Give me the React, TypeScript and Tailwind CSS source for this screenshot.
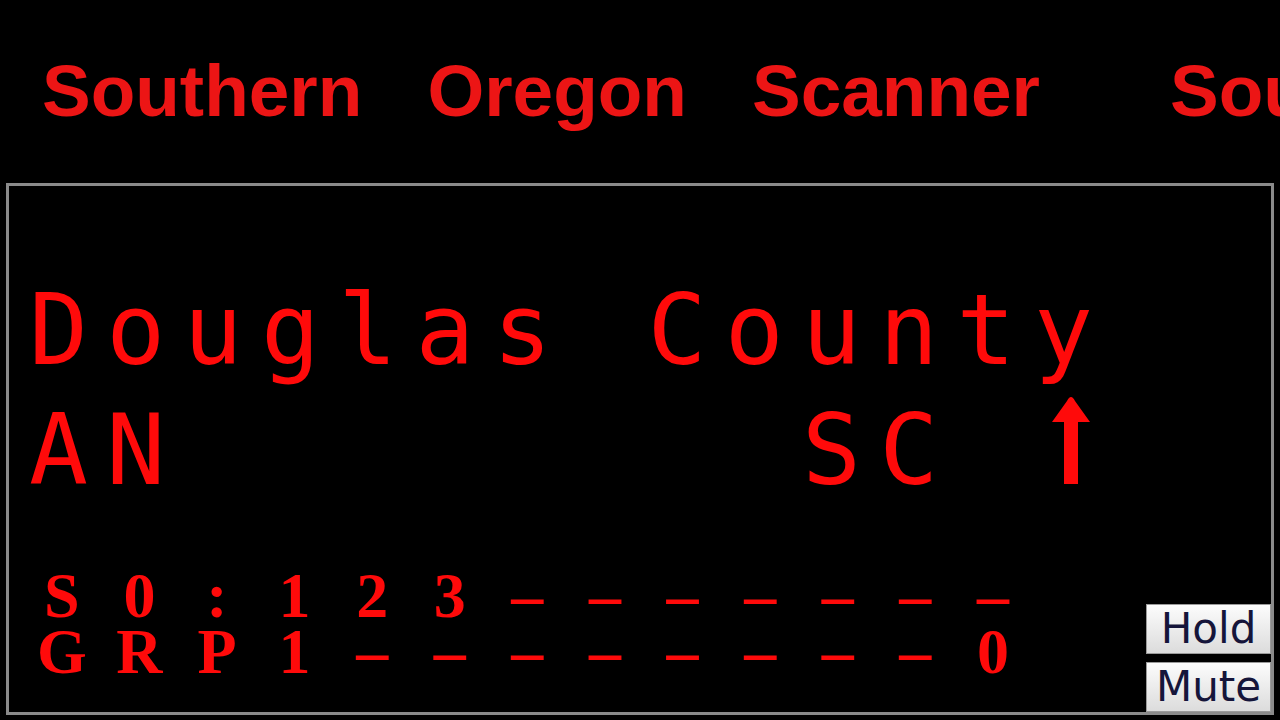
import React from "react";

const row3 = ["S", "0", ":", "1", "2", "3", "–", "–", "–", "–", "–", "–", "–"];
const row4 = ["G", "R", "P", "1", "–", "–", "–", "–", "–", "–", "–", "–", "0"];

function LcdRow({ chars }: { chars: string[] }) {
  return (
    <div className="flex">
      {chars.map((c, i) => (
        <span key={i} className="w-[77.6px] shrink-0 text-center">
          {c}
        </span>
      ))}
    </div>
  );
}

export default function App() {
  const mono = { fontFamily: '"DejaVu Sans Mono", monospace' } as React.CSSProperties;
  const btnFont = { fontFamily: '"DejaVu Sans", sans-serif' } as React.CSSProperties;
  return (
    <div className="w-[1280px] h-[720px] bg-black overflow-hidden">
      <div
        className="h-[183px] pt-[55px] pl-[42px] flex whitespace-nowrap text-[73px] leading-[72px] font-bold text-[#ec1515] overflow-hidden"
        style={{ fontFamily: '"Liberation Sans", Arial, sans-serif' }}
      >
        <span>Southern</span>
        <span className="ml-[65px]">Oregon</span>
        <span className="ml-[65px]">Scanner</span>
        <span className="ml-[130px]">Southern</span>
      </div>
      <div className="ml-[6px] w-[1268px] h-[532px] border-[3px] border-[#8a8a8a] flex">
        <div className="flex-1 text-[#ff0a0a]">
          <div
            className="pt-[84px] pl-[20px] text-[98px] leading-[120px] tracking-[18.3px] whitespace-pre"
            style={mono}
          >
            <div>Douglas County</div>
            <div>
              <span>{"AN        SC "}</span>
              <svg
                width="77"
                height="90"
                viewBox="0 0 77 90"
                className="inline-block align-baseline"
              >
                <path d="M37 3 Q39 3 41 7 L56 28 L18 28 L33 7 Q35 3 37 3 Z" fill="#ff0a0a" />
                <rect x="30" y="27" width="14" height="63" fill="#ff0a0a" />
              </svg>
            </div>
          </div>
          <div
            className="mt-[58px] pl-[14px] text-[64px] leading-[56px] font-bold whitespace-pre"
            style={{ fontFamily: '"Liberation Serif", "Times New Roman", serif' }}
          >
            <LcdRow chars={row3} />
            <LcdRow chars={row4} />
          </div>
        </div>
        <div className="w-[125px] flex flex-col justify-end gap-[8px]">
          <button
            className="h-[50px] w-[125px] border border-[#9a9a9a] bg-gradient-to-b from-[#fcfcfc] to-[#dcdcdc] text-[42px] leading-[48px] text-[#15153a] flex items-center justify-center"
            style={btnFont}
          >
            Hold
          </button>
          <button
            className="h-[50px] w-[125px] border border-[#9a9a9a] bg-gradient-to-b from-[#fcfcfc] to-[#dcdcdc] text-[42px] leading-[48px] text-[#15153a] flex items-center justify-center"
            style={btnFont}
          >
            Mute
          </button>
        </div>
      </div>
    </div>
  );
}
